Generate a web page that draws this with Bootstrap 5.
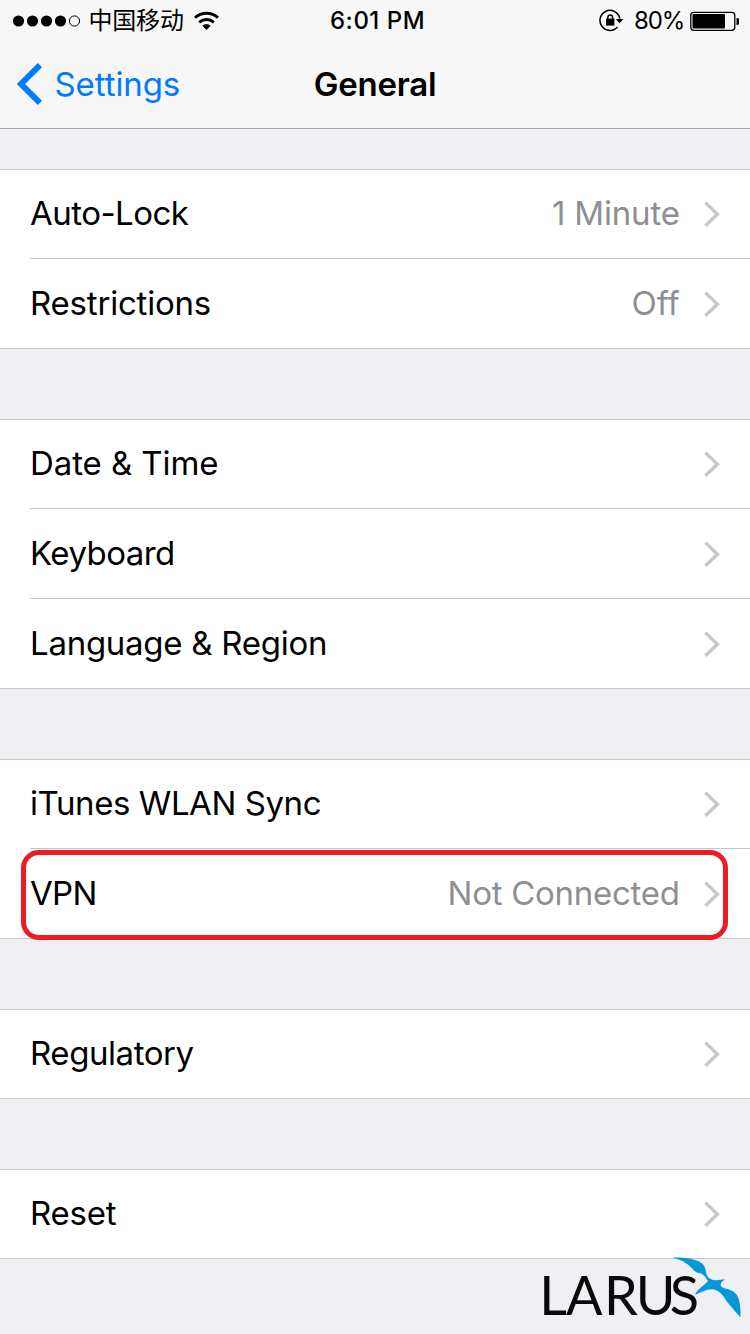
<!DOCTYPE html>
<html lang="en">
<head>
<meta charset="utf-8">
<meta name="viewport" content="width=device-width, initial-scale=1">
<title>General</title>
<link rel="stylesheet" href="https://cdn.jsdelivr.net/npm/bootstrap@5.3.0/dist/css/bootstrap.min.css">
<style>
  body { width: 750px; height: 1334px; background: #efeff4; color: #000; font-family: Inter, "Noto Sans CJK SC", sans-serif; font-size: 33px; line-height: 34px; white-space: nowrap; }
  .topbar { height: 129px; background: #f7f7f7; border-bottom: 1px solid #a7a7aa; }
  .status { height: 40px; font-size: 24px; line-height: 24px; padding: 2px 11px 0 12px; }
  .carrier { margin-left: 6.5px; letter-spacing: -.2px; }
  .clock { font-weight: 550; letter-spacing: .5px; margin-left: 4px; }
  .percent { margin-left: 10px; letter-spacing: -1.2px; }
  .battery { margin-left: 6px; }
  .wifi { margin-left: 9px; }
  .titlebar { height: 88px; }
  .heading { font-weight: 600; letter-spacing: -.25px; }
  .side { flex: 1 1 0; }
  .ios { color: #007aff; }
  .back { margin: 0 11.5px 0 16px; }
  .settings-list { padding-top: 40px; gap: 70px; }
  .list-group { border-top: 1px solid #c8c7cc; border-radius: 0; background: #fff; }
  .list-group-item { display: flex; align-items: center; height: 90px; padding: 1px 30px 0 0; margin-left: 30px; border-width: 0 0 1px; color: #000; border-color: #c8c7cc; }
  .list-group-item:last-child { margin-left: 0; padding-left: 30px; }
  .list-group-item:first-child { height: 89px; padding-top: 0; }
  .list-group-item span { padding-bottom: 2px; }
  .chev { width: 16px; height: 26px; margin-left: 24px; fill: none; stroke: #c7c7cc; stroke-width: 3.4; }
  .value { color: #8e8e93; padding-right: .3px; }
  .t1 { letter-spacing: -.08px; }
  .t2 { letter-spacing: -.2px; }
  .t3 { letter-spacing: -.27px; }
  .t4 { letter-spacing: -.43px; }
  .t5 { letter-spacing: -.54px; }
  .t8 { letter-spacing: -.7px; }
  .ring { left: 21px; top: 1px; width: 707px; height: 90px; border: 5px solid #ed1c24; border-radius: 18px; z-index: 3; pointer-events: none; }
  .brand { right: 0; bottom: 0; }
</style>
</head>
<body class="position-relative overflow-hidden">
<svg class="d-none"><symbol id="chev" viewBox="0 0 16 26"><path d="M1.4 1.6L13.4 13.2L1.4 24.8"/></symbol></svg>
<header class="topbar">
  <div class="status d-flex align-items-center">
    <div class="side d-flex align-items-center">
      <svg width="70" height="14" viewBox="0 0 70 14"><circle cx="6.5" cy="7" r="5.6"/><circle cx="20.5" cy="7" r="5.6"/><circle cx="34.5" cy="7" r="5.6"/><circle cx="48.5" cy="7" r="5.6"/><circle cx="62.5" cy="7" r="5.1" fill="none" stroke="#000"/></svg>
      <span class="carrier">中国移动</span>
      <svg class="wifi" width="28" height="20" viewBox="193 10 28 20"><path d="M195 16.6C201.500 10.800 211.500 10.800 218 16.600M199.200 21.300C203.500 17.500 209.500 17.500 213.800 21.300" fill="none" stroke="#000" stroke-width="2.900"/><path d="M202.300 24.700Q206.500 21.300 210.700 24.700L206.500 29Z"/></svg>
    </div>
    <span class="clock">6:01 PM</span>
    <div class="side d-flex align-items-center justify-content-end">
      <svg width="26" height="24" viewBox="597 9 26 24"><path d="M616.500 27A10 10 0 1 1 618.800 18.500" fill="none" stroke="#000" stroke-width="1.500"/><path d="M614.800 19H622.400L618.600 23.300Z"/><rect x="605" y="18.600" width="8.400" height="7"/><path d="M606.800 19V17.500a2.400 2.600 0 0 1 4.800 0V19" fill="none" stroke="#000" stroke-width="1.500"/></svg>
      <span class="percent">80%</span>
      <svg class="battery" width="49" height="20" viewBox="690 10 49 20"><rect x="690.800" y="11.300" width="44" height="18" rx="3" fill="none" stroke="#000" stroke-width="1.300"/><rect x="692.500" y="13" width="32.500" height="14.600" rx="1"/><path d="M736.500 17a3.500 3.500 0 0 1 0 7z"/></svg>
    </div>
  </div>
  <div class="titlebar d-flex align-items-center">
    <div class="side ios d-flex align-items-center"><svg class="back" width="27" height="42" viewBox="16 63 27 42"><path d="M39.900 65.100L21 84L39.900 102.900" fill="none" stroke="currentColor" stroke-width="5.900"/></svg><span class="t1">Settings</span></div>
    <span class="heading">General</span>
    <div class="side"></div>
  </div>
</header>
<main class="settings-list d-flex flex-column">
  <div class="list-group">
    <div class="list-group-item"><span class="t5">Auto-Lock</span><span class="ms-auto value t2">1 Minute</span><svg class="chev"><use href="#chev"/></svg></div>
    <div class="list-group-item"><span class="t2">Restrictions</span><span class="ms-auto value t1">Off</span><svg class="chev"><use href="#chev"/></svg></div>
  </div>
  <div class="list-group">
    <div class="list-group-item"><span class="t1">Date &amp; Time</span><svg class="chev ms-auto"><use href="#chev"/></svg></div>
    <div class="list-group-item"><span class="t5">Keyboard</span><svg class="chev ms-auto"><use href="#chev"/></svg></div>
    <div class="list-group-item"><span class="t3">Language &amp; Region</span><svg class="chev ms-auto"><use href="#chev"/></svg></div>
  </div>
  <div class="list-group">
    <div class="list-group-item"><span class="t4">iTunes WLAN Sync</span><svg class="chev ms-auto"><use href="#chev"/></svg></div>
    <div class="list-group-item"><span class="t8">VPN</span><span class="ms-auto value t3">Not Connected</span><svg class="chev"><use href="#chev"/></svg><div class="ring position-absolute"></div></div>
  </div>
  <div class="list-group">
    <div class="list-group-item"><span class="t4">Regulatory</span><svg class="chev ms-auto"><use href="#chev"/></svg></div>
  </div>
  <div class="list-group">
    <div class="list-group-item"><span class="t2">Reset</span><svg class="chev ms-auto"><use href="#chev"/></svg></div>
  </div>
</main>
<svg class="brand position-absolute" width="220" height="89" viewBox="0 0 660 267" role="img" aria-label="LARUS">
  <text y="209" x="28 108 222 317 419" font-family="Lato, sans-serif" font-size="162" fill="#0a0a0a">LARUS</text>
  <path fill="#0698d6" d="M428 38C462 36 500 43 514 54C530 66 526 80 530 89C534 99 546 106 560 106L585 103C575 110 570 116 573 124C580 132 603 132 615 144C630 158 633 190 631 217C620 203 600 182 589 167C578 150 568 136 548 133C528 132 512 144 495 149C500 136 522 121 534 109C528 98 520 86 508 84C500 84 495 79 490 74C478 60 460 45 428 38Z"/>
</svg>
<script src="https://cdn.jsdelivr.net/npm/bootstrap@5.3.0/dist/js/bootstrap.bundle.min.js"></script>
</body>
</html>
